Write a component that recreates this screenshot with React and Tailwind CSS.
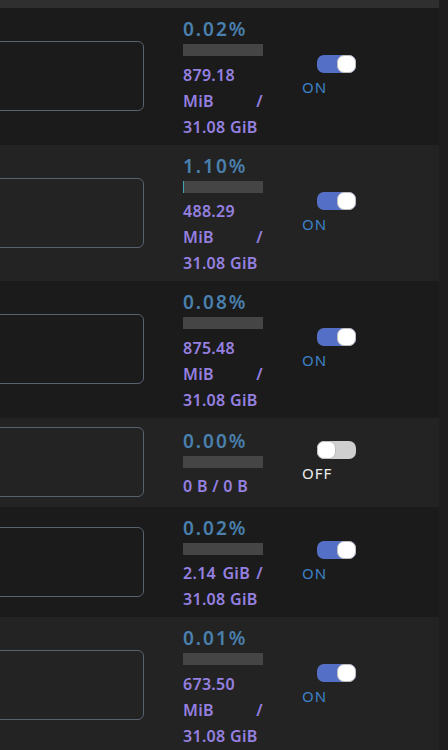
const ROWS = [
  { cpu: "0.02%", fill: 0.02, mem: "879.18 MiB / 31.08 GiB", on: true },
  { cpu: "1.10%", fill: 1.1, mem: "488.29 MiB / 31.08 GiB", on: true },
  { cpu: "0.08%", fill: 0.08, mem: "875.48 MiB / 31.08 GiB", on: true },
  { cpu: "0.00%", fill: 0, mem: "0 B / 0 B", on: false },
  { cpu: "0.02%", fill: 0.02, mem: "2.14 GiB / 31.08 GiB", on: true },
  { cpu: "0.01%", fill: 0.01, mem: "673.50 MiB / 31.08 GiB", on: true },
];

function Toggle({ on }) {
  return (
    <div className="flex flex-col items-start">
      <div
        className={
          on
            ? "relative ml-[15px] h-[18px] w-[39px] rounded-[7px] bg-[#5470c6]"
            : "relative ml-[15px] h-[18px] w-[39px] rounded-[7px] bg-[#cfcfcf]"
        }
      >
        <span
          className={
            on
              ? "absolute right-0 top-0 h-[18px] w-[19px] rounded-[7px] border border-[#bdbdbd] bg-white"
              : "absolute left-0 top-0 h-[18px] w-[19px] rounded-[7px] border border-[#bdbdbd] bg-white"
          }
        />
      </div>
      <span
        className={
          on
            ? "mt-[4px] text-[15px] leading-[20px] tracking-[1px] text-[#3f82c8]"
            : "mt-[4px] text-[15px] leading-[20px] tracking-[1px] text-[#efefef]"
        }
      >
        {on ? "ON" : "OFF"}
      </span>
    </div>
  );
}

function Row({ row, odd }) {
  return (
    <div
      className={
        odd
          ? "flex min-h-[89px] items-center bg-[#1b1b1b] py-[5px]"
          : "flex min-h-[89px] items-center bg-[#232323] py-[5px]"
      }
    >
      <div className="-ml-[20px] h-[70px] w-[164px] shrink-0 rounded-[6px] border border-[#56636f]" />

      <div className="ml-[39px] w-[80px] shrink-0 pt-[4px]">
        <div className="text-[19px] font-semibold leading-[24px] tracking-[2px] text-[#4a80ad]">
          {row.cpu}
        </div>
        <div className="mt-[3px] h-[12px] w-[80px] bg-[#454545]">
          <div
            className="h-full bg-[#3fa3b0]"
            style={{ width: `${row.fill}%` }}
          />
        </div>
        <div className="mt-[5.5px] text-justify text-[16px] font-semibold leading-[26px] tracking-[0.3px] text-[#9580e0]">
          {row.mem}
        </div>
      </div>

      <div className="ml-[39px]">
        <Toggle on={row.on} />
      </div>
    </div>
  );
}

export default function App() {
  return (
    <div
      className="flex h-[750px] w-[448px] overflow-hidden bg-[#1f1d1e]"
      style={{ fontFamily: '"Noto Sans", "Open Sans", sans-serif' }}
    >
      <div className="w-[439px] shrink-0 overflow-hidden">
        <div className="h-[8px] bg-[#2f2f2f]" />
        {ROWS.map((row, i) => (
          <Row key={i} row={row} odd={i % 2 === 0} />
        ))}
      </div>
    </div>
  );
}
